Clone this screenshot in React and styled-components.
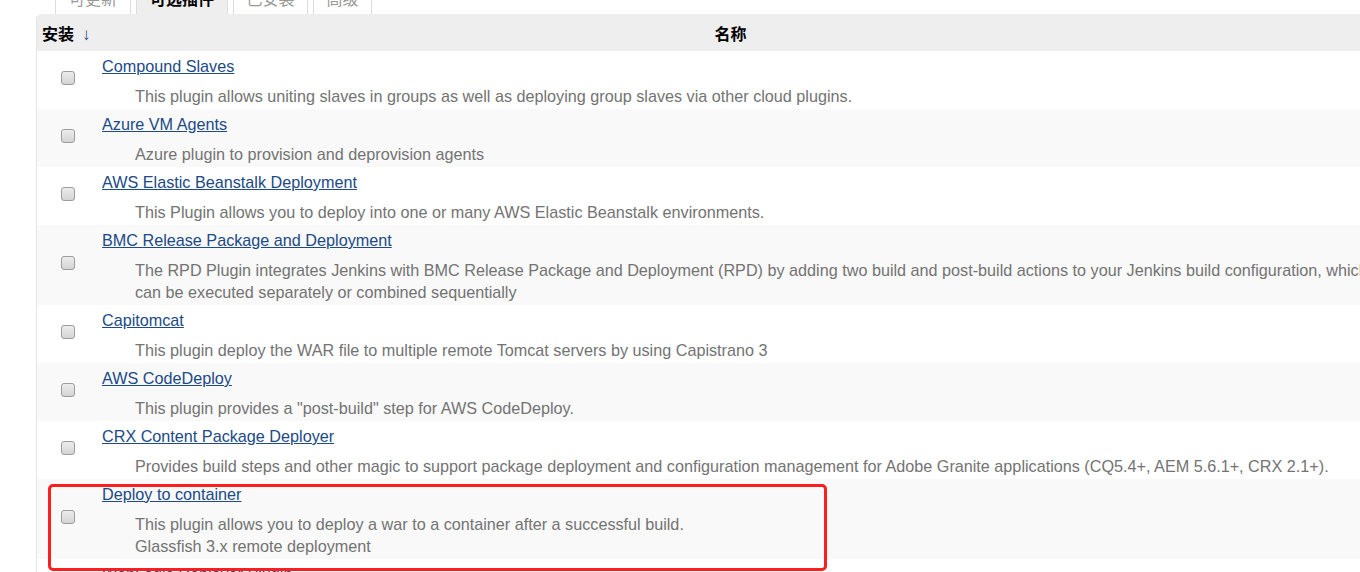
import React from "react";
import styled, { createGlobalStyle } from "styled-components";

const Global = createGlobalStyle`
  html, body { margin: 0; padding: 0; background: #fff; overflow: hidden; }
  body { font-family: "Liberation Sans", Arial, "Noto Sans CJK SC", sans-serif; font-size: 16px; color: #333; }
`;

const Page = styled.div`
  position: relative;
  display: flow-root;
  padding-left: 36px;
  width: 1400px;
`;

const TabBar = styled.div`
  display: flex;
  gap: 5px;
  margin-top: -20px;
  padding-left: 19px;
  height: 34px;
`;

const Tab = styled.div`
  box-sizing: border-box;
  width: ${(p) => p.$w}px;
  height: 34px;
  display: flex;
  align-items: center;
  justify-content: center;
  border: 1px solid #ddd;
  border-bottom: none;
  border-radius: 4px 4px 0 0;
  background: ${(p) => (p.$active ? "#eee" : "#fff")};
  color: ${(p) => (p.$active ? "#000" : "#999")};
  font-weight: ${(p) => (p.$active ? 700 : 400)};
  font-size: 16px;
`;

const Table = styled.table`
  border-collapse: separate;
  border-spacing: 0;
  table-layout: fixed;
  width: 1328px;
  border-left: 1px solid #e4e4e4;
  border-top-left-radius: 5px;
`;

const HeadCell = styled.th`
  background: #eee;
  height: 37px;
  box-sizing: border-box;
  width: ${(p) => (p.$w ? `${p.$w}px` : "auto")};
  padding: 0 5px;
  font-weight: 700;
  font-size: 16px;
  color: #000;
  text-align: ${(p) => p.$align || "center"};
  white-space: nowrap;
  &:first-child { border-top-left-radius: 5px; }
`;

const SortArrow = styled.span`
  font-weight: 400;
  font-size: 17px;
  color: #204a87;
  margin-left: 8px;
`;

const Row = styled.tr`
  background: ${(p) => (p.$odd ? "#f9f9f9" : "#fff")};
`;

const CheckCell = styled.td`
  padding: 0 5px 0 6px;
  text-align: center;
  vertical-align: middle;
`;

const Check = styled.input.attrs({ type: "checkbox" })`
  appearance: none;
  -webkit-appearance: none;
  width: 14px;
  height: 14px;
  margin: -5px 0 0 0;
  border: 1px solid #9c9c9c;
  border-radius: 3px;
  background: linear-gradient(#ececec, #d4d4d4);
  box-sizing: border-box;
  display: inline-block;
  vertical-align: middle;
`;

const NameCell = styled.td`
  padding: 4px 6px 2px 5px;
  vertical-align: top;
  white-space: nowrap;
`;

const Link = styled.a`
  display: block;
  line-height: 22px;
  color: #204a87;
  text-decoration: underline;
  font-size: 16.2px;
`;

const Desc = styled.div`
  margin-top: 8px;
  padding-left: 33px;
  line-height: 22px;
  color: #737373;
  font-size: 16.2px;
`;

const Highlight = styled.div`
  position: absolute;
  left: 48px;
  top: 484px;
  width: 779px;
  height: 87px;
  box-sizing: border-box;
  border: 3px solid #ff1e1e;
  border-radius: 5px;
  pointer-events: none;
`;

const plugins = [
  { name: "Compound Slaves", desc: ["This plugin allows uniting slaves in groups as well as deploying group slaves via other cloud plugins."] },
  { name: "Azure VM Agents", desc: ["Azure plugin to provision and deprovision agents"] },
  { name: "AWS Elastic Beanstalk Deployment", desc: ["This Plugin allows you to deploy into one or many AWS Elastic Beanstalk environments."] },
  {
    name: "BMC Release Package and Deployment",
    desc: [
      "The RPD Plugin integrates Jenkins with BMC Release Package and Deployment (RPD) by adding two build and post-build actions to your Jenkins build configuration, which",
      "can be executed separately or combined sequentially",
    ],
  },
  { name: "Capitomcat", desc: ["This plugin deploy the WAR file to multiple remote Tomcat servers by using Capistrano 3"] },
  { name: "AWS CodeDeploy", desc: ['This plugin provides a "post-build" step for AWS CodeDeploy.'] },
  { name: "CRX Content Package Deployer", desc: ["Provides build steps and other magic to support package deployment and configuration management for Adobe Granite applications (CQ5.4+, AEM 5.6.1+, CRX 2.1+)."] },
  { name: "Deploy to container", desc: ["This plugin allows you to deploy a war to a container after a successful build.", "Glassfish 3.x remote deployment"] },
  { name: "WebLogic Deployer Plugin", desc: ["Deploy artifacts to Oracle WebLogic servers."] },
];

export default function App() {
  return (
    <>
      <Global />
      <Page>
        <TabBar>
          <Tab $w={76}>可更新</Tab>
          <Tab $w={92} $active>可选插件</Tab>
          <Tab $w={75}>已安装</Tab>
          <Tab $w={59}>高级</Tab>
        </TabBar>
        <Table>
          <thead>
            <tr>
              <HeadCell $align="left" $w={60}>
                安装<SortArrow>↓</SortArrow>
              </HeadCell>
              <HeadCell>名称</HeadCell>
            </tr>
          </thead>
          <tbody>
            {plugins.map((p, i) => (
              <Row key={p.name} $odd={i % 2 === 1}>
                <CheckCell>
                  <Check />
                </CheckCell>
                <NameCell>
                  <Link href="#">{p.name}</Link>
                  <Desc>
                    {p.desc.map((line, j) => (
                      <div key={j}>{line}</div>
                    ))}
                  </Desc>
                </NameCell>
              </Row>
            ))}
          </tbody>
        </Table>
        <Highlight />
      </Page>
    </>
  );
}
